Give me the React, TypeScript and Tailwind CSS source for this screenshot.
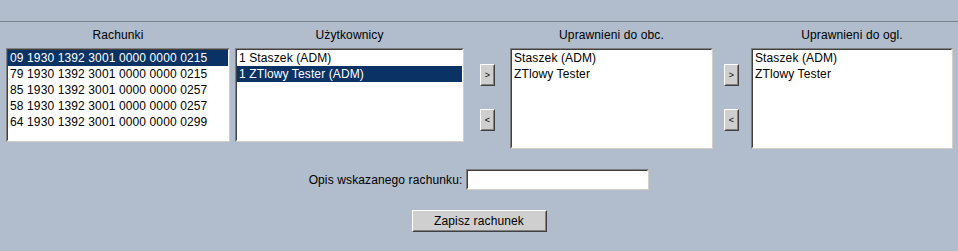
import React from 'react';

type ListProps = {
    items: string[];
    selected?: number;
    className: string;
};

function ListBox({items, selected, className}: ListProps) {
    return (
        <div className={`border border-t-[#808080] border-l-[#808080] border-b-[#d4d0c8] border-r-[#d4d0c8] ${className}`}>
            <div className="h-full border border-t-[#404040] border-l-[#404040] border-b-white border-r-white bg-white overflow-hidden">
                {items.map((item, i) => (
                    <div
                        key={item + i}
                        className={`h-4 leading-4 px-[2px] whitespace-nowrap ${i === selected ? 'bg-[#0a3264] text-white' : 'text-black'}`}
                    >
                        {item}
                    </div>
                ))}
            </div>
        </div>
    );
}

function SmallButton({label}: { label: string }) {
    return (
        <div className="w-[15px] h-[22px] border border-t-white border-l-white border-b-[#404040] border-r-[#404040]">
            <div className="h-full border border-t-[#cfcfcf] border-l-[#cfcfcf] border-b-[#808080] border-r-[#808080] bg-[#cfcfcf] flex items-center justify-center text-[9px] leading-none">
                {label}
            </div>
        </div>
    );
}

function Column({title, width, children}: { title: string; width: string; children: React.ReactNode }) {
    return (
        <div className={`flex flex-col ${width}`}>
            <div className="h-[26px] flex items-center justify-center">{title}</div>
            {children}
        </div>
    );
}

const accounts = [
    '09 1930 1392 3001 0000 0000 0215',
    '79 1930 1392 3001 0000 0000 0215',
    '85 1930 1392 3001 0000 0000 0257',
    '58 1930 1392 3001 0000 0000 0257',
    '64 1930 1392 3001 0000 0000 0299',
];

const people = ['Staszek (ADM)', 'ZTlowy Tester'];

export default function App() {
    return (
        <div className="w-[958px] h-[251px] bg-[#b1bdcc] text-[12px] tracking-[0.12px] text-black font-['Liberation_Sans',Arial,sans-serif] overflow-hidden">
            <div className="h-[21px]"/>
            <div className="h-px bg-[#7c8590]"/>

            <div className="flex items-start pl-[6px]">
                <Column title="Rachunki" width="w-[224px]">
                    <ListBox items={accounts} selected={0} className="w-[224px] h-[94px]"/>
                </Column>
                <Column title="Użytkownicy" width="w-[229px] ml-[5px]">
                    <ListBox items={['1 Staszek (ADM)', '1 ZTlowy Tester (ADM)']} selected={1} className="w-[229px] h-[94px]"/>
                </Column>

                <div className="ml-[16px] mt-[42px] flex flex-col gap-[23px]">
                    <SmallButton label=">"/>
                    <SmallButton label="<"/>
                </div>

                <Column title="Uprawnieni do obc." width="w-[203px] ml-[15px]">
                    <ListBox items={people} className="w-[203px] h-[101px]"/>
                </Column>

                <div className="ml-[11px] mt-[42px] flex flex-col gap-[23px]">
                    <SmallButton label=">"/>
                    <SmallButton label="<"/>
                </div>

                <Column title="Uprawnieni do ogl." width="w-[202px] ml-[12px]">
                    <ListBox items={people} className="w-[202px] h-[101px]"/>
                </Column>
            </div>

            <div className="mt-[20px] flex items-center justify-center gap-[4px]">
                <span>Opis wskazanego rachunku:</span>
                <div className="w-[183px] h-[21px] border border-t-[#808080] border-l-[#808080] border-b-[#d4d0c8] border-r-[#d4d0c8]">
                    <input
                        type="text"
                        className="w-full h-full border border-t-[#404040] border-l-[#404040] border-b-white border-r-white bg-white outline-none px-[2px]"
                    />
                </div>
            </div>

            <div className="mt-[20px] flex justify-center">
                <button className="w-[135px] h-[22px] border border-t-white border-l-white border-b-[#404040] border-r-[#404040] p-0">
                    <div className="h-full border border-t-[#cfcfcf] border-l-[#cfcfcf] border-b-[#808080] border-r-[#808080] bg-[#cfcfcf] flex items-center justify-center">
                        Zapisz rachunek
                    </div>
                </button>
            </div>
        </div>
    );
}
